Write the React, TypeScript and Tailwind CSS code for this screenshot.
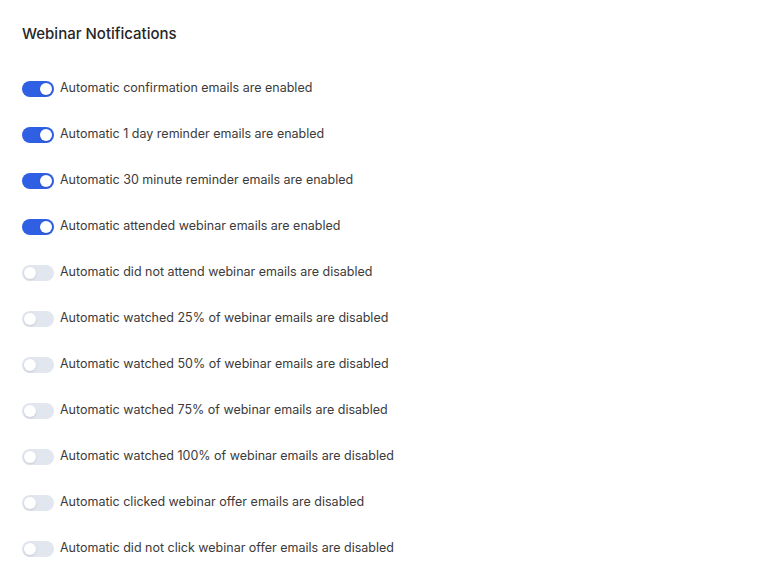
const ITEMS: { label: string; on: boolean }[] = [
  { label: "Automatic confirmation emails are enabled", on: true },
  { label: "Automatic 1 day reminder emails are enabled", on: true },
  { label: "Automatic 30 minute reminder emails are enabled", on: true },
  { label: "Automatic attended webinar emails are enabled", on: true },
  { label: "Automatic did not attend webinar emails are disabled", on: false },
  { label: "Automatic watched 25% of webinar emails are disabled", on: false },
  { label: "Automatic watched 50% of webinar emails are disabled", on: false },
  { label: "Automatic watched 75% of webinar emails are disabled", on: false },
  { label: "Automatic watched 100% of webinar emails are disabled", on: false },
  { label: "Automatic clicked webinar offer emails are disabled", on: false },
  { label: "Automatic did not click webinar offer emails are disabled", on: false }
];

function Toggle({ on }: { on: boolean }) {
  return (
    <span
      className={`flex h-4 w-8 shrink-0 items-center rounded-full px-[2px] ${
        on ? "justify-end bg-[#2f5fe3]" : "justify-start bg-[#e1e6ef]"
      }`}
    >
      <span className="h-3 w-3 rounded-full bg-white shadow-sm" />
    </span>
  );
}

export default function App() {
  return (
    <div
      className="min-h-[576px] bg-white px-[22px] pt-[23px] text-[#3b3b3b]"
      style={{ fontFamily: "Inter, 'Noto Sans', sans-serif" }}
    >
      <h2 className="text-[15px] font-medium text-[#262626]">Webinar Notifications</h2>
      <ul className="mt-[35px] flex flex-col gap-[30px]">
        {ITEMS.map((it) => (
          <li key={it.label} className="flex h-4 items-center gap-[6px]">
            <Toggle on={it.on} />
            <span className="text-[12.5px]">{it.label}</span>
          </li>
        ))}
      </ul>
    </div>
  );
}
